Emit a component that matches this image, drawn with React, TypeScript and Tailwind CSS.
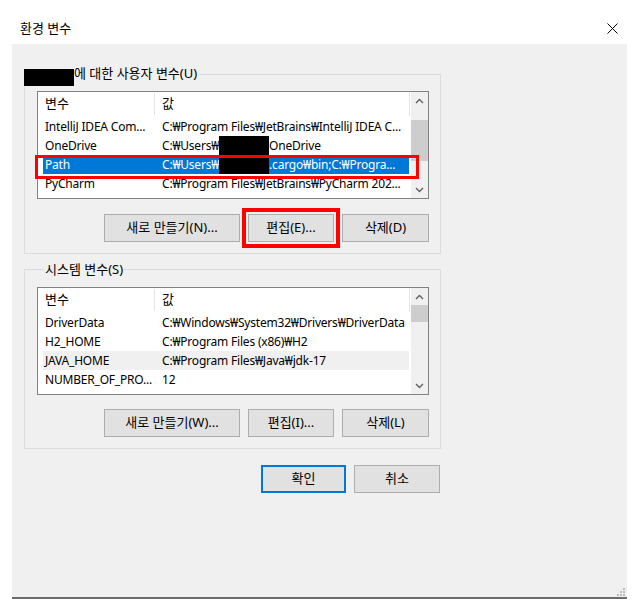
import React from 'react';

// Windows "환경 변수" (environment variables) dialog

type Row = {
    name: string;
    value: React.ReactNode;
    state?: 'selected' | 'hover';
    marked?: boolean;
};

const Redact = () => <span className="inline-block w-[50px] h-[19px] bg-black align-top" />;

const userRows: Row[] = [
    { name: 'IntelliJ IDEA Com...', value: 'C:₩Program Files₩JetBrains₩IntelliJ IDEA C...' },
    {
        name: 'OneDrive',
        value: (
            <>
                C:₩Users₩<Redact />OneDrive
            </>
        ),
    },
    {
        name: 'Path',
        value: (
            <>
                C:₩Users₩<Redact />.cargo₩bin;C:₩Progra...
            </>
        ),
        state: 'selected',
        marked: true,
    },
    { name: 'PyCharm', value: 'C:₩Program Files₩JetBrains₩PyCharm 202...' },
];

const systemRows: Row[] = [
    { name: 'DriverData', value: 'C:₩Windows₩System32₩Drivers₩DriverData' },
    { name: 'H2_HOME', value: 'C:₩Program Files (x86)₩H2' },
    { name: 'JAVA_HOME', value: 'C:₩Program Files₩Java₩jdk-17', state: 'hover' },
    { name: 'NUMBER_OF_PRO...', value: '12' },
];

const Chevron = ({ up }: { up?: boolean }) => (
    <svg width="9" height="6" viewBox="0 0 9 6">
        <polyline
            points={up ? '1,5 4.5,1.5 8,5' : '1,1 4.5,4.5 8,1'}
            fill="none"
            stroke="#606060"
            strokeWidth="1.4"
        />
    </svg>
);

const VarList = ({ rows, thumbTop, thumbHeight }: { rows: Row[]; thumbTop: number; thumbHeight: number }) => (
    <div className="relative w-[392px] h-[108px] border border-[#828282] bg-white flex">
        <div className="w-[373px] overflow-hidden">
            {/* Header */}
            <div className="flex h-[25px] items-center pb-[2px] text-[13px]">
                <div className="w-[116px] pl-[7px]">변수</div>
                <div className="w-px h-[22px] bg-[#e5e5e5]" />
                <div className="w-[254px] pl-[7px]">값</div>
                <div className="w-px h-[25px] bg-[#e5e5e5]" />
            </div>
            {/* Rows */}
            {rows.map((row) => (
                <div
                    key={row.name}
                    className={
                        'ml-[5px] w-[366px] h-[19px] flex items-center leading-[19px] whitespace-nowrap tracking-[-0.2px] ' +
                        (row.state === 'selected'
                            ? 'bg-[#0078d7] text-white'
                            : row.state === 'hover'
                              ? 'bg-[#f0f0f0]'
                              : '')
                    }
                >
                    <div className="w-[111px] pl-[2px] overflow-hidden">{row.name}</div>
                    <div className="flex-1 pl-[8px] overflow-hidden">{row.value}</div>
                </div>
            ))}
        </div>

        {/* Scrollbar */}
        <div className="w-[17px] ml-px bg-[#f0f0f0] flex flex-col">
            <div className="h-[17px] flex items-center justify-center">
                <Chevron up />
            </div>
            <div className="flex-1 flex flex-col">
                <div style={{ height: thumbTop }} />
                <div className="bg-[#cdcdcd]" style={{ height: thumbHeight }} />
            </div>
            <div className="h-[17px] flex items-center justify-center">
                <Chevron />
            </div>
        </div>

        {/* Red annotation around the selected row */}
        {rows.some((r) => r.marked) && (
            <div className="absolute left-[-3px] top-[63px] w-[384px] h-[24px] border-[3px] border-[#ff0000]" />
        )}
    </div>
);

const Button = ({ label, className = '' }: { label: string; className?: string }) => (
    <button className={'h-[28px] bg-[#e1e1e1] border border-[#adadad] text-black text-[13px] ' + className}>{label}</button>
);

const App: React.FC = () => {
    return (
        <div className="w-[642px] h-[610px] bg-white text-[12px] text-black font-['Noto_Sans','Noto_Sans_CJK_KR',sans-serif] overflow-hidden">
            {/* Title bar */}
            <div className="h-[44px] flex items-start justify-between pt-[20px] pl-[20px] pr-[24px]">
                <span className="leading-[16px] text-[13px]">환경 변수</span>
                <svg width="11" height="11" viewBox="0 0 11 11" className="mt-[3px]">
                    <line x1="0.5" y1="0.5" x2="10.5" y2="10.5" stroke="#000" strokeWidth="1" />
                    <line x1="10.5" y1="0.5" x2="0.5" y2="10.5" stroke="#000" strokeWidth="1" />
                </svg>
            </div>

            {/* Dialog body */}
            <div className="relative ml-[12px] w-[615px] h-[555px] bg-[#f0f0f0] border-b-2 border-[#6b6b6b] pl-[12px] pt-[22px]">
                {/* User variables */}
                <fieldset className="w-[417px] border border-[#dcdcdc] pl-[12px] pr-[11px] pb-[11px]">
                    <legend className="-ml-[13px] h-[16px] pr-[2px] flex items-start">
                        <span className="mt-[3px] w-[50px] h-[17px] bg-black shrink-0" />
                        <span className="leading-[14px] text-[13px]">에 대한 사용자 변수(U)</span>
                    </legend>
                    <div className="mt-[9px]">
                        <VarList rows={userRows} thumbTop={11} thumbHeight={41} />
                    </div>
                    <div className="mt-[15px] flex justify-end gap-[8px]">
                        <Button label="새로 만들기(N)..." className="w-[136px]" />
                        <Button label="편집(E)..." className="w-[86px] outline-[4px] outline-solid outline-offset-[2px] outline-[#ff0000]" />
                        <Button label="삭제(D)" className="w-[87px]" />
                    </div>
                </fieldset>

                {/* System variables */}
                <fieldset className="mt-[7px] w-[417px] border border-[#dcdcdc] pl-[12px] pr-[11px] pb-[11px]">
                    <legend className="ml-[7px] px-[1px] leading-[16px] text-[13px]">시스템 변수(S)</legend>
                    <div className="mt-[10px]">
                        <VarList rows={systemRows} thumbTop={0} thumbHeight={17} />
                    </div>
                    <div className="mt-[14px] flex justify-end gap-[8px]">
                        <Button label="새로 만들기(W)..." className="w-[136px]" />
                        <Button label="편집(I)..." className="w-[86px]" />
                        <Button label="삭제(L)" className="w-[87px]" />
                    </div>
                </fieldset>

                {/* OK / Cancel */}
                <div className="mt-[16px] w-[416px] flex justify-end gap-[8px]">
                    <button className="w-[85px] h-[28px] bg-[#e1e1e1] border-2 border-[#0078d7] text-[13px]">확인</button>
                    <Button label="취소" className="w-[86px]" />
                </div>

                {/* Resize grip */}
                <svg width="8" height="8" viewBox="0 0 8 8" className="absolute right-[2px] bottom-[1px]">
                    <rect x="6" y="0" width="2" height="2" fill="#bcbcbc" />
                    <rect x="3" y="3" width="2" height="2" fill="#bcbcbc" />
                    <rect x="6" y="3" width="2" height="2" fill="#bcbcbc" />
                    <rect x="0" y="6" width="2" height="2" fill="#bcbcbc" />
                    <rect x="3" y="6" width="2" height="2" fill="#bcbcbc" />
                    <rect x="6" y="6" width="2" height="2" fill="#bcbcbc" />
                </svg>
            </div>
        </div>
    );
};

export default App;
